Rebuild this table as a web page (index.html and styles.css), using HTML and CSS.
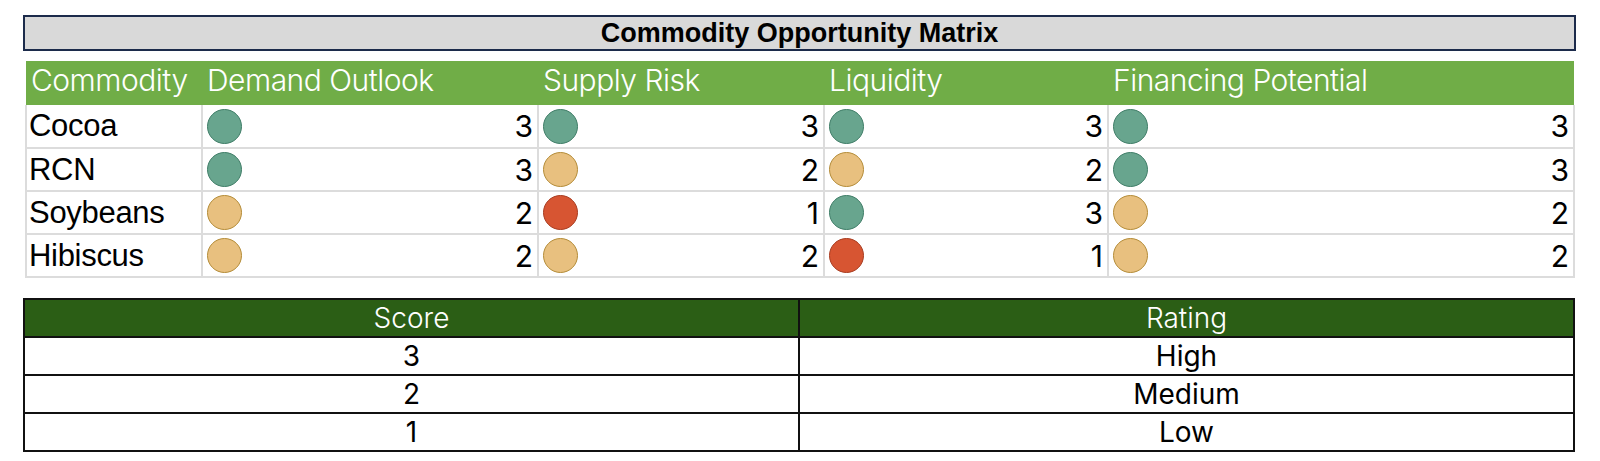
FILE: index.html
```html
<!DOCTYPE html>
<html>
<head>
<meta charset="utf-8">
<link rel="stylesheet" href="styles.css">
</head>
<body>
<div class="page">
  <div class="title">Commodity Opportunity Matrix</div>

  <table class="matrix">
    <colgroup>
      <col class="c-name"><col class="c-demand"><col class="c-supply"><col class="c-liq"><col class="c-fin">
    </colgroup>
    <thead>
      <tr><th>Commodity</th><th>Demand Outlook</th><th>Supply Risk</th><th>Liquidity</th><th>Financing Potential</th></tr>
    </thead>
    <tbody>
      <tr>
        <td class="name">Cocoa</td>
        <td><div class="cell"><span class="dot hi"></span><span class="num">3</span></div></td>
        <td><div class="cell"><span class="dot hi"></span><span class="num">3</span></div></td>
        <td><div class="cell"><span class="dot hi"></span><span class="num">3</span></div></td>
        <td><div class="cell"><span class="dot hi"></span><span class="num">3</span></div></td>
      </tr>
      <tr>
        <td class="name">RCN</td>
        <td><div class="cell"><span class="dot hi"></span><span class="num">3</span></div></td>
        <td><div class="cell"><span class="dot med"></span><span class="num">2</span></div></td>
        <td><div class="cell"><span class="dot med"></span><span class="num">2</span></div></td>
        <td><div class="cell"><span class="dot hi"></span><span class="num">3</span></div></td>
      </tr>
      <tr>
        <td class="name">Soybeans</td>
        <td><div class="cell"><span class="dot med"></span><span class="num">2</span></div></td>
        <td><div class="cell"><span class="dot low"></span><span class="num">1</span></div></td>
        <td><div class="cell"><span class="dot hi"></span><span class="num">3</span></div></td>
        <td><div class="cell"><span class="dot med"></span><span class="num">2</span></div></td>
      </tr>
      <tr>
        <td class="name">Hibiscus</td>
        <td><div class="cell"><span class="dot med"></span><span class="num">2</span></div></td>
        <td><div class="cell"><span class="dot med"></span><span class="num">2</span></div></td>
        <td><div class="cell"><span class="dot low"></span><span class="num">1</span></div></td>
        <td><div class="cell"><span class="dot med"></span><span class="num">2</span></div></td>
      </tr>
    </tbody>
  </table>

  <table class="legend">
    <thead>
      <tr><th>Score</th><th>Rating</th></tr>
    </thead>
    <tbody>
      <tr><td>3</td><td>High</td></tr>
      <tr><td>2</td><td>Medium</td></tr>
      <tr><td>1</td><td>Low</td></tr>
    </tbody>
  </table>
</div>
</body>
</html>
```

FILE: styles.css
```css
html, body {
  margin: 0;
  padding: 0;
  background: #ffffff;
}

.page {
  padding: 15px 0 0 23px;
  width: 1553px;
  display: flex;
  flex-direction: column;
}

.title {
  height: 32px;
  border: 2px solid #1c2b4b;
  background: #d9d9d9;
  font-family: "Liberation Sans", Arial, sans-serif;
  font-weight: bold;
  font-size: 27px;
  line-height: 33px;
  text-align: center;
  color: #000;
}

.matrix {
  margin: 10px 0 0 2px;
  width: 1548px;
  border-collapse: collapse;
  table-layout: fixed;
}

.c-name { width: 176px; }
.c-demand { width: 336px; }
.c-supply { width: 286px; }
.c-liq { width: 284px; }
.c-fin { width: 466px; }

.matrix th {
  background: #70ad47;
  color: #ffffff;
  font-family: "Inter", "Open Sans", sans-serif;
  font-weight: 300;
  font-size: 30px;
  letter-spacing: -0.5px;
  text-align: left;
  height: 44px;
  padding: 0 0 6px 5px;
  box-sizing: border-box;
  white-space: nowrap;
}

.matrix td {
  height: 43px;
  border: 2px solid #dcdcdc;
  padding: 0 4px;
  box-sizing: border-box;
}

.matrix tbody tr:first-child td {
  border-top: none;
}

.matrix td.name {
  font-family: "Liberation Sans", Arial, sans-serif;
  font-size: 31px;
  letter-spacing: -0.3px;
  color: #000;
  padding-left: 2px;
}

.cell {
  display: flex;
  align-items: center;
  justify-content: space-between;
}

.num {
  font-family: "Inter", "Open Sans", sans-serif;
  font-weight: 400;
  font-size: 30px;
  color: #000;
}

.dot {
  width: 35px;
  height: 35px;
  border-radius: 50%;
  box-sizing: border-box;
  border: 1.5px solid;
}

.dot.hi { background: #68a58e; border-color: #3f7d67; }
.dot.med { background: #e8c07f; border-color: #b48c38; }
.dot.low { background: #d75532; border-color: #a83c20; }

.legend {
  margin-top: 20px;
  width: 1552px;
  border-collapse: collapse;
  table-layout: fixed;
  font-family: "Inter", "Open Sans", sans-serif;
  font-size: 28px;
}

.legend th, .legend td {
  border: 2px solid #111;
  text-align: center;
  height: 38px;
  padding: 0;
  box-sizing: border-box;
  line-height: 34px;
}

.legend th {
  background: #2b5e15;
  color: #ffffff;
  font-weight: 300;
}

.legend td {
  color: #000;
  font-weight: 400;
}

.legend th:first-child, .legend td:first-child {
  width: 775px;
}
```
